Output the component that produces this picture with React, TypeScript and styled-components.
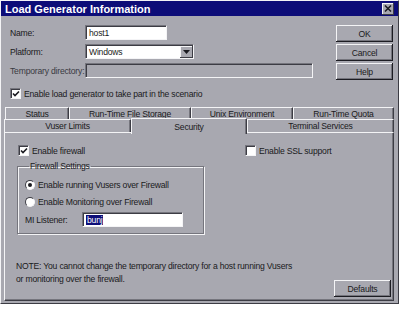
import React from "react";
import styled, { createGlobalStyle } from "styled-components";

const GlobalStyle = createGlobalStyle`
  html, body {
    margin: 0;
    padding: 0;
    background: #ffffff;
  }
  * {
    box-sizing: border-box;
  }
`;

const grey = "#a8a8b0";
const dark = "#3c3c44";
const shade = "#75757d";
const light = "#f4f4f6";
const ink = "#1a1a20";

const Window = styled.div`
  width: 399px;
  height: 304px;
  display: flex;
  flex-direction: column;
  background: ${grey};
  border: 1px solid;
  border-color: ${light} ${dark} ${dark} ${light};
  font-family: "Liberation Sans", Arial, sans-serif;
  font-size: 8.6px;
  letter-spacing: -0.2px;
  color: ${ink};
`;

const TitleBar = styled.div`
  height: 15px;
  display: flex;
  align-items: center;
  justify-content: space-between;
  padding: 0 4px 0 4px;
  background: #0d0d78;
`;

const Title = styled.span`
  color: #ffffff;
  font-weight: bold;
  font-size: 11px;
  letter-spacing: 0;
`;

const CloseButton = styled.div`
  width: 12px;
  height: 12px;
  display: flex;
  align-items: center;
  justify-content: center;
  background: ${grey};
  box-shadow: inset -1px -1px ${dark}, inset 1px 1px ${light};
`;

const Content = styled.div`
  flex: 1;
  display: flex;
  flex-direction: column;
  padding: 9px 4px 2px 3px;
`;

const TopArea = styled.div`
  display: flex;
  justify-content: space-between;
  padding: 0 1px 0 6px;
`;

const Fields = styled.div`
  width: 303px;
  display: flex;
  flex-direction: column;
`;

const FieldGrid = styled.div`
  display: grid;
  grid-template-columns: 75px 1fr;
  grid-auto-rows: 15px;
  row-gap: 4px;
  align-items: center;
`;

const Label = styled.span<{ $disabled?: boolean }>`
  white-space: nowrap;
  color: ${({ $disabled }) => ($disabled ? "#3a3a42" : ink)};
`;

const Field = styled.div<{ $width?: number; $disabled?: boolean }>`
  height: 15px;
  width: ${({ $width }) => ($width ? `${$width}px` : "100%")};
  display: flex;
  align-items: center;
  padding: 0 3px;
  background: ${({ $disabled }) => ($disabled ? grey : "#ffffff")};
  border: 1px solid;
  border-color: ${shade} ${light} ${light} ${shade};
  box-shadow: inset 1px 1px ${dark};
  white-space: nowrap;
`;

const Select = styled(Field)`
  padding-right: 0;
  justify-content: space-between;
`;

const DropButton = styled.div`
  width: 13px;
  height: 12px;
  margin-top: 1px;
  display: flex;
  align-items: center;
  justify-content: center;
  background: ${grey};
  box-shadow: inset -1px -1px ${dark}, inset 1px 1px ${light};
`;

const CheckRow = styled.label<{ $indent?: number; $top?: number }>`
  display: flex;
  align-items: center;
  gap: 3px;
  margin-left: ${({ $indent }) => $indent ?? 0}px;
  margin-top: ${({ $top }) => $top ?? 0}px;
  white-space: nowrap;
`;

const Box = styled.span`
  width: 11px;
  height: 11px;
  display: flex;
  align-items: center;
  justify-content: center;
  background: #ffffff;
  border: 1px solid;
  border-color: ${shade} ${light} ${light} ${shade};
  box-shadow: inset 1px 1px ${dark};
`;

const Radio = styled.span<{ $on?: boolean }>`
  width: 10px;
  height: 10px;
  border-radius: 50%;
  display: flex;
  align-items: center;
  justify-content: center;
  background: #ffffff;
  border: 1px solid;
  border-color: ${dark} ${light} ${light} ${dark};

  &::after {
    content: "";
    width: 4px;
    height: 4px;
    border-radius: 50%;
    background: ${({ $on }) => ($on ? ink : "transparent")};
  }
`;

const Buttons = styled.div`
  width: 57px;
  display: flex;
  flex-direction: column;
  gap: 2px;
`;

const Button = styled.div`
  height: 17px;
  width: 57px;
  display: flex;
  align-items: center;
  justify-content: center;
  background: ${grey};
  box-shadow: inset -1px -1px #1c1c22, inset 1px 1px ${light},
    inset -2px -2px ${shade};
`;

const TabStrip = styled.div`
  margin-top: 9px;
  display: flex;
  flex-direction: column;
`;

const TabRow = styled.div<{ $offset: number }>`
  display: flex;
  height: 12px;
  margin-left: ${({ $offset }) => $offset}px;
  align-items: flex-end;
`;

const Tab = styled.div<{ $width: number; $active?: boolean }>`
  position: relative;
  width: ${({ $width }) => $width}px;
  height: ${({ $active }) => ($active ? 16 : 13)}px;
  margin-bottom: ${({ $active }) => ($active ? -2 : 0)}px;
  z-index: ${({ $active }) => ($active ? 2 : 0)};
  display: flex;
  align-items: ${({ $active }) => ($active ? "flex-start" : "center")};
  padding-top: ${({ $active }) => ($active ? 3 : 0)}px;
  justify-content: center;
  background: ${grey};
  border-top: 1px solid ${light};
  border-left: 1px solid ${light};
  border-right: 1px solid ${dark};
  box-shadow: inset -1px 0 ${shade};
  white-space: nowrap;
`;

const Panel = styled.div`
  flex: 1;
  position: relative;
  z-index: 1;
  display: flex;
  flex-direction: column;
  padding: 12px 2px 3px 12px;
  border: 1px solid;
  border-color: ${light} ${dark} ${dark} ${light};
  box-shadow: inset -1px -1px ${shade};
`;

const PanelTop = styled.div`
  display: flex;
  align-items: flex-start;
`;

const LeftColumn = styled.div`
  width: 228px;
  display: flex;
  flex-direction: column;
`;

const GroupBox = styled.fieldset`
  width: 187px;
  margin: 5px 0 0 0;
  padding: 9px 0 6px 7px;
  border: 1px solid ${shade};
  box-shadow: 1px 1px 0 ${light}, inset 1px 1px 0 ${light};
  display: flex;
  flex-direction: column;
  gap: 7px;
`;

const Legend = styled.legend`
  padding: 0 1px;
  margin-left: 4px;
`;

const ListenerRow = styled.div`
  display: grid;
  grid-template-columns: 57px 101px;
  align-items: center;
  margin-top: -2px;
`;

const Selected = styled.span`
  background: #0d0d78;
  color: #ffffff;
  padding: 0 1px;
`;

const BottomRow = styled.div`
  margin-top: auto;
  display: flex;
  justify-content: space-between;
  align-items: flex-end;
`;

const Note = styled.p`
  margin: 0 0 11px -1px;
  line-height: 13px;
`;

const Check = () => (
  <svg width="8" height="8" viewBox="0 0 8 8">
    <path d="M1 3.5 L3 5.5 L7 1.5" stroke={ink} strokeWidth="1.6" fill="none" />
  </svg>
);

export default function App() {
  return (
    <>
      <GlobalStyle />
      <Window>
        <TitleBar>
          <Title>Load Generator Information</Title>
          <CloseButton>
            <svg width="8" height="7" viewBox="0 0 8 7">
              <path d="M1 0.5 L7 6.5 M7 0.5 L1 6.5" stroke={ink} strokeWidth="1.5" />
            </svg>
          </CloseButton>
        </TitleBar>
        <Content>
          <TopArea>
            <Fields>
              <FieldGrid>
                <Label>Name:</Label>
                <Field $width={82}>host1</Field>
                <Label>Platform:</Label>
                <Select $width={109}>
                  Windows
                  <DropButton>
                    <svg width="7" height="4" viewBox="0 0 7 4">
                      <path d="M0 0 H7 L3.5 4 Z" fill={ink} />
                    </svg>
                  </DropButton>
                </Select>
                <Label $disabled>Temporary directory:</Label>
                <Field $disabled />
              </FieldGrid>
              <CheckRow $top={10}>
                <Box>
                  <Check />
                </Box>
                Enable load generator to take part in the scenario
              </CheckRow>
            </Fields>
            <Buttons>
              <Button>OK</Button>
              <Button>Cancel</Button>
              <Button>Help</Button>
            </Buttons>
          </TopArea>

          <TabStrip>
            <TabRow $offset={1}>
              <Tab $width={64}>Status</Tab>
              <Tab $width={122}>Run-Time File Storage</Tab>
              <Tab $width={102}>Unix Environment</Tab>
              <Tab $width={101}>Run-Time Quota</Tab>
            </TabRow>
            <TabRow $offset={0}>
              <Tab $width={127}>Vuser Limits</Tab>
              <Tab $width={116} $active>
                Security
              </Tab>
              <Tab $width={147}>Terminal Services</Tab>
            </TabRow>
          </TabStrip>

          <Panel>
            <PanelTop>
              <LeftColumn>
                <CheckRow $indent={1}>
                  <Box>
                    <Check />
                  </Box>
                  Enable firewall
                </CheckRow>
                <GroupBox>
                  <Legend>Firewall Settings</Legend>
                  <CheckRow>
                    <Radio $on />
                    Enable running Vusers over Firewall
                  </CheckRow>
                  <CheckRow>
                    <Radio />
                    Enable Monitoring over Firewall
                  </CheckRow>
                  <ListenerRow>
                    <Label>MI Listener:</Label>
                    <Field>
                      <Selected>bunj</Selected>
                    </Field>
                  </ListenerRow>
                </GroupBox>
              </LeftColumn>
              <CheckRow>
                <Box />
                Enable SSL support
              </CheckRow>
            </PanelTop>
            <BottomRow>
              <Note>
                NOTE: You cannot change the temporary directory for a host running Vusers
                <br />
                or monitoring over the firewall.
              </Note>
              <Button>Defaults</Button>
            </BottomRow>
          </Panel>
        </Content>
      </Window>
    </>
  );
}
